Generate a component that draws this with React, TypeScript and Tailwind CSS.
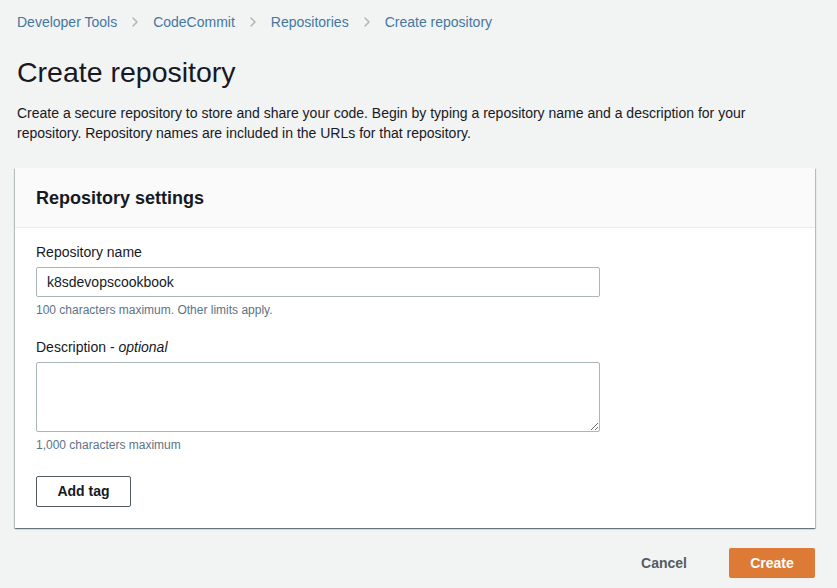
import { ChevronRight } from "lucide-react";

const crumbs = ["Developer Tools", "CodeCommit", "Repositories", "Create repository"];

export default function App() {
  return (
    <div className="min-h-[588px] w-full bg-[#f2f3f3] pl-[15px] pr-[22px] pt-[12px] text-[#16191f] font-['Liberation_Sans',Arial,sans-serif]">
      {/* Breadcrumbs */}
      <nav className="flex items-center pl-[2px] text-[14px] leading-[20px]">
        {crumbs.map((c, i) => (
          <div key={c} className="flex items-center">
            <span className="text-[#44789f]">{c}</span>
            {i < crumbs.length - 1 && (
              <ChevronRight className="mx-[10px] h-[16px] w-[16px] text-[#a8b3b7]" strokeWidth={2} />
            )}
          </div>
        ))}
      </nav>

      <h1 className="mt-[22px] pl-[2px] text-[28.5px] leading-[36px] font-normal">Create repository</h1>
      <p className="mt-[13px] max-w-[762px] pl-[2px] text-[14px] leading-[20px]">
        Create a secure repository to store and share your code. Begin by typing a repository name and a description for your
        repository. Repository names are included in the URLs for that repository.
      </p>

      {/* Settings card */}
      <section className="mt-[25px] bg-white shadow-[0_1px_1px_0_rgba(0,28,36,0.35),1px_1px_1px_0_rgba(0,28,36,0.2),-1px_1px_1px_0_rgba(0,28,36,0.2)]">
        <div className="h-[60px] flex items-center border-b border-[#eaeded] bg-[#fafafa] px-[21px]">
          <h2 className="text-[18px] font-bold leading-[22px]">Repository settings</h2>
        </div>
        <div className="px-[21px] pt-[14px] pb-[21px]">
          <label className="block text-[14px] leading-[20px]">Repository name</label>
          <input
            readOnly
            value="k8sdevopscookbook"
            className="mt-[5px] block h-[30px] w-[564px] rounded-[2px] border border-[#aab7b8] bg-white px-[10px] text-[14px] text-[#16191f] outline-none"
          />
          <p className="mt-[5px] text-[12px] leading-[16px] text-[#5c7386]">100 characters maximum. Other limits apply.</p>

          <label className="mt-[19px] block text-[14px] leading-[20px]">
            Description - <i className="italic">optional</i>
          </label>
          <textarea
            readOnly
            className="mt-[5px] block h-[70px] w-[564px] rounded-[2px] border border-[#aab7b8] bg-white px-[10px] py-[4px] text-[14px] outline-none"
          />
          <p className="mt-[5px] text-[12px] leading-[16px] text-[#5c7386]">1,000 characters maximum</p>

          <button className="mt-[23px] h-[31px] w-[95px] rounded-[2px] border border-[#545b64] bg-white text-[14px] font-bold text-[#16191f]">
            Add tag
          </button>
        </div>
      </section>

      {/* Footer actions */}
      <div className="mt-[20px] flex items-center justify-end gap-[22px]">
        <button className="h-[30px] px-[20px] text-[14px] font-bold text-[#545b64]">Cancel</button>
        <button className="h-[30px] w-[86px] rounded-[2px] bg-[#dd7b36] text-[14px] font-bold text-white">Create</button>
      </div>
    </div>
  );
}
